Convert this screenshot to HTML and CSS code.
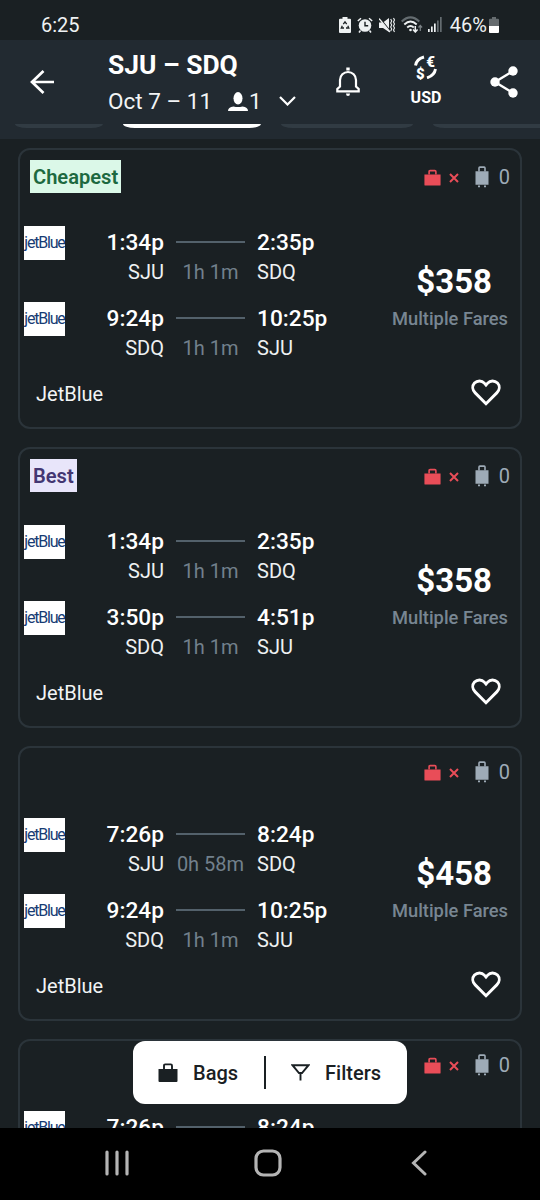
FILE: index.html
```html
<!DOCTYPE html>
<html lang="en">
<head>
    <meta charset="UTF-8">
    <meta name="viewport" content="width=device-width, initial-scale=1.0">
    <title>SJU – SDQ flights</title>
    <link rel="stylesheet" href="styles.css">
</head>
<body>
    <svg class="sprite" width="0" height="0">
        <symbol id="bag" viewBox="0 0 20 20">
            <path d="M.5 6.500h19V18.500a1 1 0 0 1-1 1h-17a1 1 0 0 1-1-1z" fill="currentColor"/>
            <path d="M6 6.500V3.200Q6 1.900 7.200 1.900h5.600q1.200 0 1.200 1.300V6.500" fill="none" stroke="currentColor" stroke-width="1.900"/>
        </symbol>
        <symbol id="cross" viewBox="0 0 10 10">
            <path d="M1 1l8 8M9 1L1 9" fill="none" stroke="currentColor" stroke-width="2"/>
        </symbol>
        <symbol id="suitcase" viewBox="0 0 14 22">
            <path d="M.5 5.300h13v13.500H.5zM3 19.500h2v1.800H3zM9 19.500h2v1.800H9z" fill="currentColor"/>
            <path d="M4 5.500V2q0-.9.9-.9h4.200q.9 0 .9.9v3.500" fill="none" stroke="currentColor" stroke-width="1.600"/>
        </symbol>
        <symbol id="heart" viewBox="0 0 30 27">
            <path d="M15 24.700L4.200 13.900C1.200 10.900 1 6.800 3.500 4.100 6.300 1.200 10.800 1.200 13.300 4.100L15 6.100l1.700-2C19.200 1.200 23.700 1.200 26.500 4.100c2.500 2.700 2.300 6.800-.7 9.800z" fill="none" stroke="currentColor" stroke-width="2.900"/>
        </symbol>
    </svg>

    <div class="phone">
        <div class="status">
            <span class="clock">6:25</span>
            <div class="status-icons">
                <svg width="12" height="16" viewBox="0 0 12 16">
                    <path d="M3.500 0h5v1.700H11q1 0 1 1V15q0 1-1 1H1q-1 0-1-1V2.700q0-1 1-1h2.500z" fill="#eef1f2"/>
                    <path d="M4.300 7.200L6 4.800l1.700 2.400M8.800 8.700l1 2.300H7M5 11H2.300l1-2.300" fill="none" stroke="#1a2023" stroke-width="1.300"/>
                </svg>
                <svg width="16" height="16" viewBox="0 0 16 16">
                    <circle cx="8" cy="8.500" r="6.300" fill="#eef1f2"/>
                    <path d="M.8 4L4 1.200M15.200 4L12 1.200M3.500 13.500L2 15.500M12.500 13.500l1.500 2" stroke="#eef1f2" stroke-width="1.500"/>
                    <path d="M8 4.800v4h3.200" fill="none" stroke="#1a2023" stroke-width="1.400"/>
                </svg>
                <svg width="16" height="16" viewBox="0 0 16 16">
                    <path d="M0 5.500h4L10 1v14L4 11H0z" fill="#eef1f2"/>
                    <path d="M1 1.500L11 14" stroke="#1a2023" stroke-width="1.500"/>
                    <path d="M0 1.500L11 15" stroke="#eef1f2" stroke-width="1.200"/>
                    <path d="M11.700 2l1 2-1 2 1 2-1 2 1 2-1 2M14.500 1l1 2-1 2 1 2-1 2 1 2-1 2 1 2" fill="none" stroke="#eef1f2" stroke-width="1.100"/>
                </svg>
                <svg class="wifi" width="22" height="17" viewBox="0 0 22 17">
                    <path d="M.7 5.500Q9.500-2.800 18.300 5.500" fill="none" stroke="#646c70" stroke-width="2"/>
                    <path d="M3.300 8.500q6.200-5.800 12.400 0M6.200 11.500q3.300-3 6.600 0" fill="none" stroke="#eef1f2" stroke-width="1.900"/>
                    <circle cx="9.500" cy="14" r="1.300" fill="#eef1f2"/>
                    <path d="M14.300 10v6M12 13.500l2.300 2.500 2.300-2.500" fill="none" stroke="#eef1f2" stroke-width="1.500"/>
                    <path d="M19.300 15V9.500M17.500 11.500l1.800-2 1.800 2" fill="none" stroke="#7b8286" stroke-width="1.200"/>
                </svg>
                <svg width="14" height="15" viewBox="0 0 14 15">
                    <path d="M0 12h1.700v3H0zM3 9.500h1.700V15H3zM6 6.500h1.700V15H6z" fill="#eef1f2"/>
                    <path d="M9 3.500h1.700V15H9zM12 0h1.700v15H12z" fill="#646c70"/>
                </svg>
                <span class="percent">46%</span>
                <svg class="battery" width="10" height="16" viewBox="0 0 10 16">
                    <path d="M3 0h4v1.700h2q1 0 1 1V9H0V2.700q0-1 1-1h2z" fill="#666c6f"/>
                    <path d="M0 9h10v6q0 1-1 1H1q-1 0-1-1z" fill="#fff"/>
                </svg>
            </div>
        </div>

        <header class="header">
            <div class="bar">
                <svg class="back" width="24" height="24" viewBox="0 0 24 24">
                    <path d="M24 12H2M13.500 1L2 12l11.500 11" fill="none" stroke="#fff" stroke-width="2.700"/>
                </svg>
                <div class="trip">
                    <h1>SJU – SDQ</h1>
                    <div class="dates">
                        <span class="days">Oct 7 – 11</span>
                        <svg class="person" width="20" height="19" viewBox="0 0 20 19">
                            <ellipse cx="10" cy="6.300" rx="4.500" ry="6.200" fill="#fff"/>
                            <path d="M0 19q0-4 5.500-4.600 4.500 1 9 0 5.500.6 5.500 4.600z" fill="#fff"/>
                        </svg>
                        <span>1</span>
                        <svg class="chevron" width="17" height="10" viewBox="0 0 17 10">
                            <path d="M1 1l7.500 7.500L16 1" fill="none" stroke="#fff" stroke-width="2.200"/>
                        </svg>
                    </div>
                </div>
                <svg class="bell" width="24" height="30" viewBox="0 0 24 30">
                    <path d="M1.300 24.300v-2.300l2.700-2.500V13a8 8 0 0 1 16 0v6.500l2.700 2.500v2.300z" fill="none" stroke="#fff" stroke-width="2.200"/>
                    <path d="M10.300.5h3.400v3h-3.400zM10 26.500h4q0 2.500-2 2.500t-2-2.500z" fill="#fff"/>
                </svg>
                <div class="currency">
                    <div class="currency-icon">
                        <svg width="24" height="24" viewBox="0 0 24 24">
                            <path d="M1.500 10.500Q2.500 4 10 2M21.500 14Q20.500 20.500 13 22.800" fill="none" stroke="#fff" stroke-width="2.900"/>
                        </svg>
                        <span class="euro">€</span>
                        <span class="dollar">$</span>
                    </div>
                    <span>USD</span>
                </div>
                <svg class="share" width="28" height="32" viewBox="0 0 28 32">
                    <path d="M23 5L5 16l18 11" fill="none" stroke="#fff" stroke-width="2.400"/>
                    <circle cx="23" cy="5" r="4.700" fill="#fff"/>
                    <circle cx="5" cy="16" r="4.700" fill="#fff"/>
                    <circle cx="23" cy="27" r="4.700" fill="#fff"/>
                </svg>
            </div>
            <div class="tabs">
                <div class="tab"></div>
                <div class="tab active"></div>
                <div class="tab"></div>
                <div class="tab"></div>
            </div>
        </header>

        <main class="results">
            <article class="card">
                <div class="card-top">
                    <span class="badge cheapest">Cheapest</span>
                    <div class="bags">
                        <svg class="red bag"><use href="#bag"/></svg>
                        <svg class="red cross"><use href="#cross"/></svg>
                        <svg class="suitcase"><use href="#suitcase"/></svg>
                        <span>0</span>
                    </div>
                </div>
                <div class="card-body">
                    <div class="legs">
                        <div class="leg">
                            <span class="logo">jetBlue</span>
                            <b class="from">1:34p</b><i class="line"></i><b>2:35p</b>
                            <span class="from code">SJU</span><span class="duration">1h 1m</span><span class="code">SDQ</span>
                        </div>
                        <div class="leg">
                            <span class="logo">jetBlue</span>
                            <b class="from">9:24p</b><i class="line"></i><b>10:25p</b>
                            <span class="from code">SDQ</span><span class="duration">1h 1m</span><span class="code">SJU</span>
                        </div>
                    </div>
                    <div class="price">
                        <strong>$358</strong>
                        <span>Multiple Fares</span>
                    </div>
                </div>
                <div class="card-foot">
                    <span>JetBlue</span>
                    <svg class="heart"><use href="#heart"/></svg>
                </div>
            </article>

            <article class="card">
                <div class="card-top">
                    <span class="badge best">Best</span>
                    <div class="bags">
                        <svg class="red bag"><use href="#bag"/></svg>
                        <svg class="red cross"><use href="#cross"/></svg>
                        <svg class="suitcase"><use href="#suitcase"/></svg>
                        <span>0</span>
                    </div>
                </div>
                <div class="card-body">
                    <div class="legs">
                        <div class="leg">
                            <span class="logo">jetBlue</span>
                            <b class="from">1:34p</b><i class="line"></i><b>2:35p</b>
                            <span class="from code">SJU</span><span class="duration">1h 1m</span><span class="code">SDQ</span>
                        </div>
                        <div class="leg">
                            <span class="logo">jetBlue</span>
                            <b class="from">3:50p</b><i class="line"></i><b>4:51p</b>
                            <span class="from code">SDQ</span><span class="duration">1h 1m</span><span class="code">SJU</span>
                        </div>
                    </div>
                    <div class="price">
                        <strong>$358</strong>
                        <span>Multiple Fares</span>
                    </div>
                </div>
                <div class="card-foot">
                    <span>JetBlue</span>
                    <svg class="heart"><use href="#heart"/></svg>
                </div>
            </article>

            <article class="card plain">
                <div class="card-top">
                    <div class="bags">
                        <svg class="red bag"><use href="#bag"/></svg>
                        <svg class="red cross"><use href="#cross"/></svg>
                        <svg class="suitcase"><use href="#suitcase"/></svg>
                        <span>0</span>
                    </div>
                </div>
                <div class="card-body">
                    <div class="legs">
                        <div class="leg">
                            <span class="logo">jetBlue</span>
                            <b class="from">7:26p</b><i class="line"></i><b>8:24p</b>
                            <span class="from code">SJU</span><span class="duration">0h 58m</span><span class="code">SDQ</span>
                        </div>
                        <div class="leg">
                            <span class="logo">jetBlue</span>
                            <b class="from">9:24p</b><i class="line"></i><b>10:25p</b>
                            <span class="from code">SDQ</span><span class="duration">1h 1m</span><span class="code">SJU</span>
                        </div>
                    </div>
                    <div class="price">
                        <strong>$458</strong>
                        <span>Multiple Fares</span>
                    </div>
                </div>
                <div class="card-foot">
                    <span>JetBlue</span>
                    <svg class="heart"><use href="#heart"/></svg>
                </div>
            </article>

            <article class="card plain">
                <div class="card-top">
                    <div class="bags">
                        <svg class="red bag"><use href="#bag"/></svg>
                        <svg class="red cross"><use href="#cross"/></svg>
                        <svg class="suitcase"><use href="#suitcase"/></svg>
                        <span>0</span>
                    </div>
                </div>
                <div class="card-body">
                    <div class="legs">
                        <div class="leg">
                            <span class="logo">jetBlue</span>
                            <b class="from">7:26p</b><i class="line"></i><b>8:24p</b>
                        </div>
                    </div>
                </div>
            </article>

            <div class="floating">
                <button type="button"><svg class="bag"><use href="#bag"/></svg>Bags</button>
                <span class="divider"></span>
                <button type="button">
                    <svg class="funnel" width="19" height="17" viewBox="0 0 19 17">
                        <path d="M1.500 1.200h16L11 9H8zM9.500 9v7.500" fill="none" stroke="#1a2023" stroke-width="1.900"/>
                    </svg>Filters
                </button>
            </div>
        </main>

        <nav class="navbar">
            <svg width="24" height="26" viewBox="0 0 24 26">
                <path d="M2 2v22M12 2v22M22 2v22" stroke="#b4b4b4" stroke-width="3.200" stroke-linecap="round"/>
            </svg>
            <svg class="home" width="28" height="28" viewBox="0 0 28 28">
                <rect x="2" y="2" width="24" height="24" rx="7.500" fill="none" stroke="#b4b4b4" stroke-width="3.200"/>
            </svg>
            <svg width="16" height="26" viewBox="0 0 16 26">
                <path d="M14 2L2.500 13 14 24" fill="none" stroke="#b4b4b4" stroke-width="3" stroke-linecap="round"/>
            </svg>
        </nav>
    </div>
</body>
</html>
```
FILE: styles.css
```css
* {
    box-sizing: border-box;
}
body {
    margin: 0;
    font-family: Roboto, "Liberation Sans", sans-serif;
    background: #1a2023;
    color: #fff;
}
svg {
    display: block;
    flex-shrink: 0;
}
.sprite {
    display: none;
}
.phone {
    display: flex;
    flex-direction: column;
    height: 1200px;
    width: 540px;
    overflow: hidden;
}

/* status bar */
.status {
    display: flex;
    justify-content: space-between;
    align-items: center;
    height: 40px;
    padding: 9px 41px 0;
    font-size: 20px;
    color: #eef1f2;
}
.status-icons {
    display: flex;
    align-items: center;
    gap: 6px;
}
.wifi {
    margin-right: -1px;
}
.percent {
    margin-left: 2px;
}
.battery {
    margin-left: -4px;
}

/* header */
.header {
    height: 99px;
    background: #222a31;
}
.bar {
    display: flex;
    height: 84px;
}
.back {
    margin: 30px 0 0 30px;
}
.trip {
    width: 228px;
    margin-left: 54px;
    padding-top: 9px;
}
h1 {
    margin: 0;
    font-size: 26.4px;
    line-height: 32px;
    font-weight: 700;
}
.dates {
    display: flex;
    align-items: center;
    font-size: 22.5px;
    line-height: 40px;
    color: #f2f4f5;
}
.days {
    width: 104px;
    white-space: nowrap;
}
.person {
    margin: 0 1px 0 16px;
}
.chevron {
    margin-left: 17px;
}
.bell {
    margin-top: 27px;
}
.currency {
    display: flex;
    flex-direction: column;
    align-items: center;
    width: 34px;
    margin: 15px 0 0 49px;
    font-size: 16px;
    line-height: 20px;
    font-weight: 700;
}
.currency-icon {
    position: relative;
    height: 33px;
}
.euro,
.dollar {
    position: absolute;
    font-size: 15px;
    line-height: 14px;
    font-weight: 900;
}
.euro {
    right: 3px;
    top: 0;
}
.dollar {
    left: 2px;
    top: 12px;
}
.share {
    margin: 26px 0 0 47px;
}
.tabs {
    display: flex;
    gap: 20px;
    width: 600px;
    padding-left: 15px;
}
.tab {
    width: 132px;
    height: 4px;
    background: #313b43;
    border-radius: 0 0 12px 12px / 0 0 4px 4px;
}
.tab:first-child {
    width: 88px;
}
.tab.active {
    width: 138px;
    background: #fff;
}

/* flight results */
.results {
    position: relative;
    flex: 1;
    min-height: 0;
    padding: 9px 18px 0;
    overflow: hidden;
}
.card {
    height: 281px;
    margin-bottom: 18px;
    border: 2px solid #2b343a;
    border-radius: 12px;
}
.card.plain {
    height: 275px;
}
.card-top {
    display: flex;
    align-items: flex-start;
    height: 76px;
    padding: 10px 10px 0;
}
.plain .card-top {
    height: 70px;
    padding-top: 7px;
}
.badge {
    height: 33px;
    padding: 0 3px;
    font-size: 20.1px;
    line-height: 35px;
    font-weight: 600;
}
.cheapest {
    background: #dbf8e8;
    color: #1d6940;
}
.best {
    background: #e8e5fa;
    color: #433672;
}
.bags {
    display: flex;
    align-items: center;
    height: 34px;
    margin-left: auto;
    font-size: 20px;
    line-height: 36px;
    color: #9eabb7;
}
.bag {
    width: 17px;
    height: 17px;
}
.cross {
    width: 10px;
    height: 10px;
    margin: 2px 16px 0 8px;
}
.suitcase {
    width: 14px;
    height: 22px;
    margin-right: 10px;
}
.red {
    color: #e94d58;
}
.card-body {
    display: flex;
    justify-content: space-between;
    height: 138px;
    padding: 0 2px 0 4px;
}
.leg {
    display: grid;
    grid-template-columns: 41px 99px 93px 80px;
    grid-template-rows: 34px 24px;
    align-items: center;
    align-content: start;
    height: 76px;
    font-size: 20px;
}
.leg b {
    font-size: 22.7px;
    line-height: 28px;
    font-weight: 500;
    white-space: nowrap;
}
.from {
    text-align: right;
}
.from.code {
    grid-column: 2;
}
.code {
    color: #eef1f2;
}
.duration {
    text-align: center;
    color: #72808c;
}
.line {
    height: 2px;
    margin: -3px 12px 0;
    background: #53616b;
}
.logo {
    height: 34px;
    overflow: hidden;
    background: #fff;
    color: #173c74;
    font-size: 16px;
    line-height: 33px;
    letter-spacing: -1.2px;
    text-align: center;
    white-space: nowrap;
}
.price {
    display: flex;
    flex-direction: column;
    align-items: flex-end;
    width: 128px;
    padding: 36px 10px 0 0;
    color: #788692;
    font-size: 18.3px;
    font-weight: 500;
    line-height: 22px;
    white-space: nowrap;
}
.price strong {
    margin: 0 16px 6px 0;
    color: #fff;
    font-size: 33px;
    line-height: 40px;
}
.card-foot {
    display: flex;
    justify-content: space-between;
    align-items: center;
    height: 60px;
    padding: 0 19px 0 16px;
    font-size: 20px;
    color: #f2f4f5;
}
.heart {
    width: 30px;
    height: 27px;
    margin-bottom: 3px;
    color: #fff;
}

/* pinned over the list */
.floating {
    position: absolute;
    left: 133px;
    bottom: 24px;
    display: flex;
    align-items: center;
    width: 274px;
    height: 63px;
    padding: 0 25px;
    background: #fff;
    border-radius: 12px;
}
.floating button {
    display: flex;
    align-items: center;
    padding: 0;
    border: none;
    background: none;
    color: #1a2023;
    font: 500 20px Roboto, sans-serif;
}
.floating .bag {
    width: 20px;
    height: 21px;
    margin-right: 15px;
}
.divider {
    width: 2px;
    height: 33px;
    margin: 0 25px 0 26px;
    background: #1a2023;
}
.funnel {
    margin-right: 15px;
}

/* system navigation */
.navbar {
    display: flex;
    align-items: center;
    justify-content: space-between;
    height: 72px;
    padding: 0 113px 2px 105px;
    background: #000;
}
.home {
    margin-right: 4px;
}
```
